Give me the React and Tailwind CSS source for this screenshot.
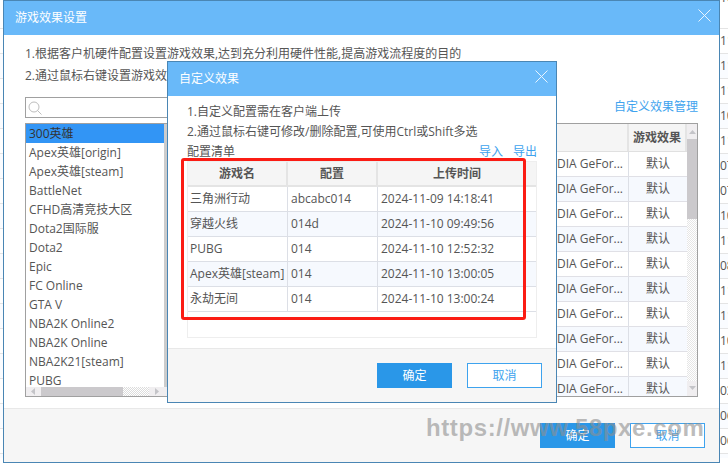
import React from "react"

const backDigits = ["11", "11", "11", "10", "11", "07", "07", "10", "11", "08", "11", "11", "10", "11", "03", "06", "06"]

const games = [
  "300英雄",
  "Apex英雄[origin]",
  "Apex英雄[steam]",
  "BattleNet",
  "CFHD高清竞技大区",
  "Dota2国际服",
  "Dota2",
  "Epic",
  "FC Online",
  "GTA V",
  "NBA2K Online2",
  "NBA2K Online",
  "NBA2K21[steam]",
  "PUBG"
]

const configs = [
  ["三角洲行动", "abcabc014", "2024-11-09 14:18:41"],
  ["穿越火线", "014d", "2024-11-10 09:49:56"],
  ["PUBG", "014", "2024-11-10 12:52:32"],
  ["Apex英雄[steam]", "014", "2024-11-10 13:00:05"],
  ["永劫无间", "014", "2024-11-10 13:00:24"]
]

const CloseIcon = () => (
  <svg className="mb-[6px]" width="13" height="13" viewBox="0 0 13 13" fill="none" stroke="#e8f4fe" strokeWidth="1">
    <path d="M.5.5l12 12M12.5.5l-12 12" />
  </svg>
)

const Arrow = ({ d }) => (
  <svg width="7" height="7" viewBox="0 0 7 7" fill="#c4c4c8">
    <path d={d} />
  </svg>
)

const DialogHead = ({ title }) => (
  <div className="h-[34px] shrink-0 bg-[#69b9f9] flex items-center justify-between pl-[11px] pr-[8px] text-xs text-white">
    <span>{title}</span>
    <CloseIcon />
  </div>
)

const Btn = ({ children, primary }) => (
  <button
    className={
      primary
        ? "w-[75px] h-[25px] bg-[#2a97e8] text-white text-xs"
        : "w-[75px] h-[25px] border border-[#3ea3ee] bg-white text-[#3ea3ee] text-xs"
    }
  >
    {children}
  </button>
)

const GameList = () => (
  <div className="w-[150px] h-[274px] border border-[#a0a0a0] flex flex-col bg-white overflow-hidden">
    <div className="flex-1 flex min-h-0">
      <div className="w-[138px] overflow-hidden">
        {games.map((name, i) => (
          <div
            key={name}
            className={i === 0 ? "h-[19px] leading-[19px] pl-[3px] bg-[#3295f5] text-[#333]" : "h-[19px] leading-[19px] pl-[3px]"}
          >
            {name}
          </div>
        ))}
      </div>
      <div className="flex-1 bg-[#ccc]"></div>
    </div>
    <div className="h-[9px] shrink-0 bg-[#f0eef0] flex items-center">
      <div className="w-[15px] flex justify-center">
        <Arrow d="M5 0v7L1 3.5z" />
      </div>
      <div className="w-[82px] h-full bg-[#cbc9cc]"></div>
      <div className="w-[26px] h-full bg-[repeating-conic-gradient(#dcdcdc_0_25%,#ffffff_0_50%)] bg-[length:2px_2px]"></div>
      <div className="w-[15px] flex justify-center">
        <Arrow d="M2 0v7l4-3.5z" />
      </div>
    </div>
  </div>
)

const EffectTable = () => (
  <div className="flex-1 h-[274px] border border-[#a0a0a0] flex bg-white overflow-hidden">
    <div className="flex-1 min-w-0">
      <div className="h-[28px] bg-[#f5f5f5] border-b border-[#e0e0e0] flex font-bold">
        <div className="flex-1 border-r-2 border-[#e4e4e4]"></div>
        <div className="w-[58px] flex items-center justify-center border-r-2 border-[#e4e4e4]">游戏效果</div>
      </div>
      {Array.from({ length: 10 }).map((_, i) => (
        <div key={i} className={i % 2 === 1 ? "h-[25px] border-b border-[#e0e0e6] flex bg-[#f6f9fe]" : "h-[25px] border-b border-[#e0e0e6] flex"}>
          <div className="flex-1 border-r border-[#dcdfe6] flex items-center justify-end pr-[5px]">NVIDIA GeFor...</div>
          <div className="w-[58px] flex items-center justify-center">默认</div>
        </div>
      ))}
    </div>
    <div className="w-[10px] shrink-0 bg-[repeating-conic-gradient(#e6e6e6_0_25%,#ffffff_0_50%)] bg-[length:2px_2px] flex flex-col">
      <div className="h-[15px] bg-[#f0eef0] flex items-center justify-center">
        <Arrow d="M3.500 2L7 6H0z" />
      </div>
      <div className="h-[80px] bg-[#cbc9cc]"></div>
      <div className="flex-1"></div>
      <div className="h-[15px] bg-[#f0eef0] flex items-center justify-center">
        <Arrow d="M0 1h7L3.500 5z" />
      </div>
    </div>
  </div>
)

const ConfigTable = () => (
  <div className="relative h-[177px] border border-[#eeeeee] bg-white">
    <div className="grid grid-cols-[100px_90px_1fr] h-[25px] bg-[#f5f5f5] font-bold border-b-2 border-[#e4e4e4]">
      <div className="flex items-center justify-center border-r-2 border-[#e4e4e4]">游戏名</div>
      <div className="flex items-center justify-center border-r-2 border-[#e4e4e4]">配置</div>
      <div className="flex items-center justify-center">上传时间</div>
    </div>
    {configs.map((row, i) => (
      <div
        key={row[0]}
        className={
          i % 2 === 1
            ? "grid grid-cols-[100px_90px_1fr] h-[25px] bg-[#f6f9fe] border-b border-[#dcdfe6]"
            : "grid grid-cols-[100px_90px_1fr] h-[25px] border-b border-[#dcdfe6]"
        }
      >
        <div className="flex items-center pl-[2px] border-r border-[#dcdfe6] whitespace-nowrap">{row[0]}</div>
        <div className="flex items-center pl-[3px] border-r border-[#dcdfe6]">{row[1]}</div>
        <div className="flex items-center pl-[3px]">{row[2]}</div>
      </div>
    ))}
    {/* red annotation drawn over the table */}
    <div className="absolute left-[-7px] top-[-4px] w-[345px] h-[162px] border-[3px] border-[#fb1c14] rounded-[3px]"></div>
  </div>
)

const ConfigDialog = () => (
  <div className="absolute left-[167px] top-[61px] w-[390px] h-[342px] border border-[#4a86b4] bg-white flex flex-col">
    <DialogHead title="自定义效果" />
    <div className="flex-1 px-[19px] pt-[6px]">
      <p className="leading-[20px] h-[20px]">1.自定义配置需在客户端上传</p>
      <p className="leading-[20px] h-[20px]">2.通过鼠标右键可修改/删除配置,可使用Ctrl或Shift多选</p>
      <div className="h-[19px] flex items-center justify-between">
        <span>配置清单</span>
        <div className="flex gap-[10px] text-[#3ea3ee]">
          <span>导入</span>
          <span>导出</span>
        </div>
      </div>
      <ConfigTable />
    </div>
    <div className="h-[54px] shrink-0 bg-[#f6f6f6] border-t border-[#e8e8e8] flex justify-end items-center gap-[15px] pr-[14px]">
      <Btn primary>确定</Btn>
      <Btn>取消</Btn>
    </div>
  </div>
)

export default function App() {
  return (
    <div className="relative w-[728px] h-[466px] overflow-hidden bg-white text-xs text-[#555] font-['Open_Sans','Noto_Sans_CJK_SC',sans-serif]">
      {/* table of the page behind the dialogs */}
      <div className="h-[37px] border-b border-[#e4e4e4] pl-[720px] leading-none">
        <div className="-mt-[8px]">10</div>
      </div>
      {backDigits.map((d, i) => (
        <div
          key={i}
          className={
            i % 2 === 0
              ? "h-[25px] border-b border-[#e4e4e4] pl-[720px] flex items-center"
              : "h-[25px] border-b border-[#e4e4e4] bg-[#fafcff] pl-[720px] flex items-center"
          }
        >
          {d}
        </div>
      ))}
      <div className="grid grid-cols-[11px_100px_70px_80px_130px_70px_150px_70px_47px] h-[4px] divide-x divide-[#e4e4e4] bg-[#fafcff]">
        {Array.from({ length: 9 }).map((_, i) => (
          <div key={i}></div>
        ))}
      </div>

      {/* 游戏效果设置 */}
      <div className="absolute left-[3px] top-0 w-[717px] h-[463px] border border-[#4a86b4] bg-white flex flex-col">
        <DialogHead title="游戏效果设置" />
        <div className="flex-1 pl-[21px] pr-[21px] pt-[8px] relative">
          <p className="leading-[22px] h-[22px]">1.根据客户机硬件配置设置游戏效果,达到充分利用硬件性能,提高游戏流程度的目的</p>
          <p className="leading-[22px] h-[22px]">2.通过鼠标右键设置游戏效果</p>
          <div className="flex h-[21px] mt-[10px] items-end justify-between">
            <div className="w-[300px] h-[21px] border border-[#a0a0a0] flex items-center pl-[2px]">
              <svg width="14" height="14" viewBox="0 0 14 14" fill="none" stroke="#bdbdbd" strokeWidth="1">
                <circle cx="6" cy="6" r="5" />
                <path d="M9.500 9.500l4 4" />
              </svg>
            </div>
            <span className="text-[#3ea3ee] mb-[3px]">自定义效果管理</span>
          </div>
          <div className="flex mt-[5px] gap-[2px]">
            <GameList />
            <EffectTable />
          </div>
        </div>
        <div className="h-[54px] shrink-0 bg-[#f6f6f6] border-t border-[#e8e8e8] flex justify-end items-center gap-[15px] pr-[14px]">
          <Btn primary>确定</Btn>
          <Btn>取消</Btn>
        </div>
      </div>

      <ConfigDialog />

      {/* watermark */}
      <div className="absolute left-[426px] top-[410px] text-[24px] leading-[36px] font-bold tracking-[0.6px] text-[#8f8f8f]/60 whitespace-nowrap font-['Liberation_Sans',sans-serif]">
        https://www.58pxe.com
      </div>
    </div>
  )
}
